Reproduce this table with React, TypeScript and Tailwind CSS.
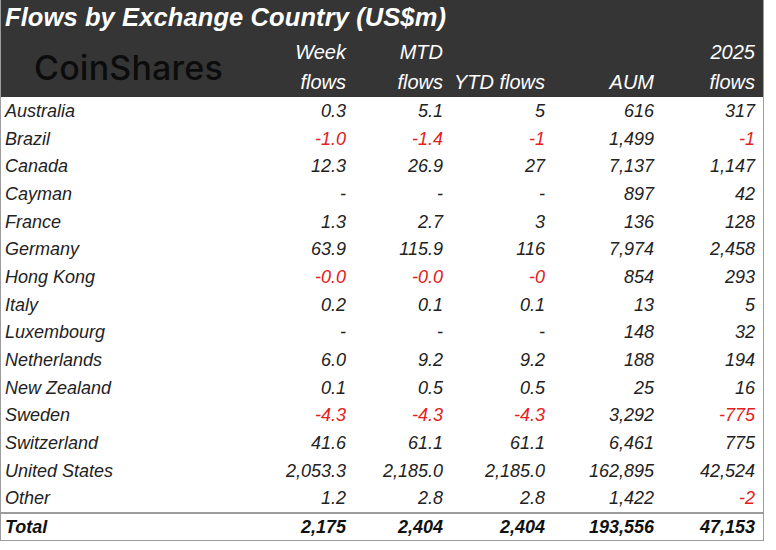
import React from 'react';

type Row = {
  name: string;
  week: string;
  mtd: string;
  ytd: string;
  aum: string;
  y2025: string;
};

const rows: Row[] = [
  { name: 'Australia', week: '0.3', mtd: '5.1', ytd: '5', aum: '616', y2025: '317' },
  { name: 'Brazil', week: '-1.0', mtd: '-1.4', ytd: '-1', aum: '1,499', y2025: '-1' },
  { name: 'Canada', week: '12.3', mtd: '26.9', ytd: '27', aum: '7,137', y2025: '1,147' },
  { name: 'Cayman', week: '-', mtd: '-', ytd: '-', aum: '897', y2025: '42' },
  { name: 'France', week: '1.3', mtd: '2.7', ytd: '3', aum: '136', y2025: '128' },
  { name: 'Germany', week: '63.9', mtd: '115.9', ytd: '116', aum: '7,974', y2025: '2,458' },
  { name: 'Hong Kong', week: '-0.0', mtd: '-0.0', ytd: '-0', aum: '854', y2025: '293' },
  { name: 'Italy', week: '0.2', mtd: '0.1', ytd: '0.1', aum: '13', y2025: '5' },
  { name: 'Luxembourg', week: '-', mtd: '-', ytd: '-', aum: '148', y2025: '32' },
  { name: 'Netherlands', week: '6.0', mtd: '9.2', ytd: '9.2', aum: '188', y2025: '194' },
  { name: 'New Zealand', week: '0.1', mtd: '0.5', ytd: '0.5', aum: '25', y2025: '16' },
  { name: 'Sweden', week: '-4.3', mtd: '-4.3', ytd: '-4.3', aum: '3,292', y2025: '-775' },
  { name: 'Switzerland', week: '41.6', mtd: '61.1', ytd: '61.1', aum: '6,461', y2025: '775' },
  { name: 'United States', week: '2,053.3', mtd: '2,185.0', ytd: '2,185.0', aum: '162,895', y2025: '42,524' },
  { name: 'Other', week: '1.2', mtd: '2.8', ytd: '2.8', aum: '1,422', y2025: '-2' },
];

const cols = 'grid grid-cols-[255px_90px_97px_102px_109px_101px_8px]';

// negatives (but not the "-" placeholder) are red
const Num = ({ v }: { v: string }) => (
  <div className={`text-right ${v.length > 1 && v.startsWith('-') ? 'text-[#e3201b]' : 'text-[#222]'}`}>{v}</div>
);

export default function App() {
  return (
    <div className="w-[776px] h-[550px] bg-white" style={{ fontFamily: '"Liberation Sans", Arial, sans-serif' }}>
      <div className="w-[764px] border-x border-b border-[#9c9c9c] italic">
        {/* Header */}
        <div className="bg-[#353535] text-white">
          <div className="h-[36px] flex items-center pl-[4px] text-[25.5px] font-bold leading-none tracking-[0.1px]">
            Flows by Exchange Country (US$m)
          </div>
          <div className={`${cols} grid-rows-[31px_30px] text-[20px] leading-none`}>
            <div className="row-span-2 flex items-center pl-[33px] pt-[2px] not-italic text-[#0c0c0c] text-[34px] font-medium tracking-[0.2px]" style={{ fontFamily: 'Inter, "Noto Sans", sans-serif' }}>
              CoinShares
            </div>
            <div className="text-right self-center">Week</div>
            <div className="text-right self-center">MTD</div>
            <div />
            <div />
            <div className="text-right self-center">2025</div>
            <div />
            <div className="text-right self-center">flows</div>
            <div className="text-right self-center">flows</div>
            <div className="text-right self-center">YTD flows</div>
            <div className="text-right self-center">AUM</div>
            <div className="text-right self-center">flows</div>
            <div />
          </div>
        </div>

        {/* Body */}
        <div className="text-[18px] leading-none">
          {rows.map((r) => (
            <div key={r.name} className={`${cols} h-[27.7px] items-center`}>
              <div className="pl-[4px] text-[#222]">{r.name}</div>
              <Num v={r.week} />
              <Num v={r.mtd} />
              <Num v={r.ytd} />
              <Num v={r.aum} />
              <Num v={r.y2025} />
              <div />
            </div>
          ))}
          <div className={`${cols} h-[28px] items-center border-t-2 border-[#9c9c9c] font-bold text-[#111]`}>
            <div className="pl-[4px]">Total</div>
            <div className="text-right">2,175</div>
            <div className="text-right">2,404</div>
            <div className="text-right">2,404</div>
            <div className="text-right">193,556</div>
            <div className="text-right">47,153</div>
            <div />
          </div>
        </div>
      </div>
    </div>
  );
}
